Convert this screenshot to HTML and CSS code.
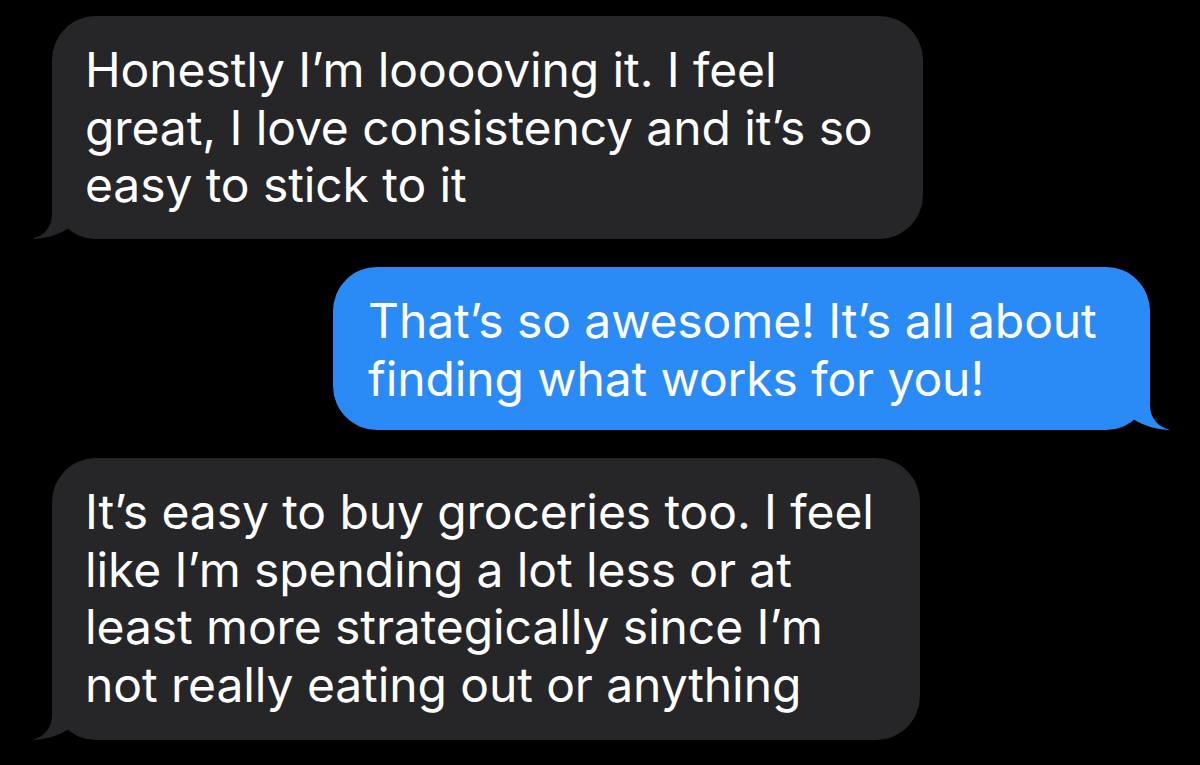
FILE: index.html
```html
<!DOCTYPE html>
<html lang="en">
<head>
<meta charset="utf-8">
<title>Messages</title>
<link rel="stylesheet" href="styles.css">
</head>
<body>
<main class="thread">
  <div class="bubble bubble--in bubble--w1">
    <p class="bubble__text">Honestly I’m looooving it. I feel<br>great, I love consistency and it’s so<br>easy to stick to it</p>
    <svg class="tail" viewBox="0 0 40 45" width="40" height="45" aria-hidden="true"><path d="M20,2 L20,20 C20,33 12,42 0,45 C12,45 26,41 37,34 L37,2 Z"/></svg>
  </div>
  <div class="bubble bubble--out bubble--w2">
    <p class="bubble__text">That’s so awesome! It’s all about<br>finding what works for you!</p>
    <svg class="tail" viewBox="0 0 40 45" width="40" height="45" aria-hidden="true"><path d="M20,2 L20,20 C20,33 12,42 0,45 C12,45 26,41 37,34 L37,2 Z"/></svg>
  </div>
  <div class="bubble bubble--in bubble--w3">
    <p class="bubble__text">It’s easy to buy groceries too. I feel<br>like I’m spending a lot less or at<br>least more strategically since I’m<br>not really eating out or anything</p>
    <svg class="tail" viewBox="0 0 40 45" width="40" height="45" aria-hidden="true"><path d="M20,2 L20,20 C20,33 12,42 0,45 C12,45 26,41 37,34 L37,2 Z"/></svg>
  </div>
</main>
</body>
</html>
```

FILE: styles.css
```css
html, body {
  margin: 0;
  padding: 0;
  background: #000;
}

body {
  width: 1200px;
  height: 765px;
  overflow: hidden;
  font-family: Inter, "Noto Sans", "Liberation Sans", sans-serif;
  color: #fff;
}

.thread {
  display: flex;
  flex-direction: column;
  gap: 28px;
  padding: 16px 50px 0 52px;
}

.bubble {
  position: relative;
  box-sizing: border-box;
  border-radius: 44px;
  padding: 25px 0 25px 33px;
}

.bubble__text {
  margin: 0;
  font-size: 48px;
  line-height: 57.5px;
  white-space: nowrap;
  letter-spacing: -0.1px;
}

.bubble--in {
  align-self: flex-start;
  background: #262629;
}

.bubble--in .tail {
  position: absolute;
  left: -20px;
  bottom: 0;
  fill: #262629;
}

.bubble--out {
  align-self: flex-end;
  background: #2b8bf6;
  padding-left: 35px;
}

.bubble--out .tail {
  position: absolute;
  right: -20px;
  bottom: 0;
  fill: #2b8bf6;
  transform: scaleX(-1);
}

.bubble--w1 { width: 871px; height: 223px; }
.bubble--w2 { width: 817px; height: 163px; }
.bubble--w3 { width: 868px; height: 282px; }
```
